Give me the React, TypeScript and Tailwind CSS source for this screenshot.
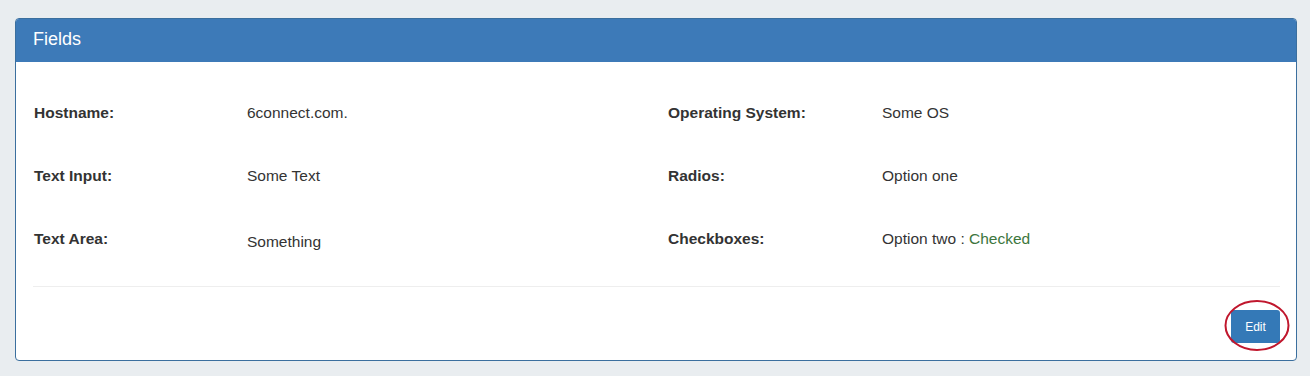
import React from "react"

const FONT = "font-['Liberation_Sans',Arial,sans-serif]"

interface Field {
  label: string
  value: React.ReactNode
  valueClass?: string
}

const LEFT: Field[] = [
  { label: "Hostname:", value: "6connect.com." },
  { label: "Text Input:", value: "Some Text" },
  { label: "Text Area:", value: "Something", valueClass: "translate-y-[3px]" },
]

const RIGHT: Field[] = [
  { label: "Operating System:", value: "Some OS" },
  { label: "Radios:", value: "Option one" },
  {
    label: "Checkboxes:",
    value: (
      <>
        Option two : <span className="text-[#3c763d]">Checked</span>
      </>
    ),
  },
]

export default function App() {
  return (
    <div className={`w-[1310px] h-[376px] bg-[#e9edf0] pt-[18px] px-[15px] ${FONT}`}>
      <div className="w-[1282px] rounded-[4px] border border-[#3b6f9e] bg-white overflow-hidden">
        {/* header */}
        <div className="h-[43px] bg-[#3d7ab8] flex items-center px-[17px] pb-[4px]">
          <span className="text-white text-[18px] leading-none">Fields</span>
        </div>

        {/* body */}
        <div className="pl-[18px] pr-[16px] pt-[19px]">
          {LEFT.map((left, i) => {
            const right = RIGHT[i]
            return (
              <div key={left.label} className="h-[63px] grid grid-cols-[213px_421px_214px_1fr] items-center text-[15.5px] text-[#333]">
                <div className="font-bold">{left.label}</div>
                <div className={left.valueClass}>{left.value}</div>
                <div className="font-bold">{right.label}</div>
                <div>{right.value}</div>
              </div>
            )
          })}

          <div className="mt-[16px] ml-[-1px] border-t border-[#eeeeee]" />

          <div className="flex justify-end pt-[23px] pb-[17px]">
            <div className="relative">
              <button className="h-[33px] w-[49px] rounded-[3px] bg-[#3479b7] text-white text-[12px] flex items-center justify-center">
                Edit
              </button>
              <svg
                className="absolute left-[-7px] top-[-11px] pointer-events-none"
                width="66"
                height="53"
                viewBox="0 0 66 53"
              >
                <ellipse cx="33" cy="26.5" rx="31.5" ry="24.5" fill="none" stroke="#c0172d" strokeWidth="2" />
              </svg>
            </div>
          </div>
        </div>
      </div>
    </div>
  )
}
